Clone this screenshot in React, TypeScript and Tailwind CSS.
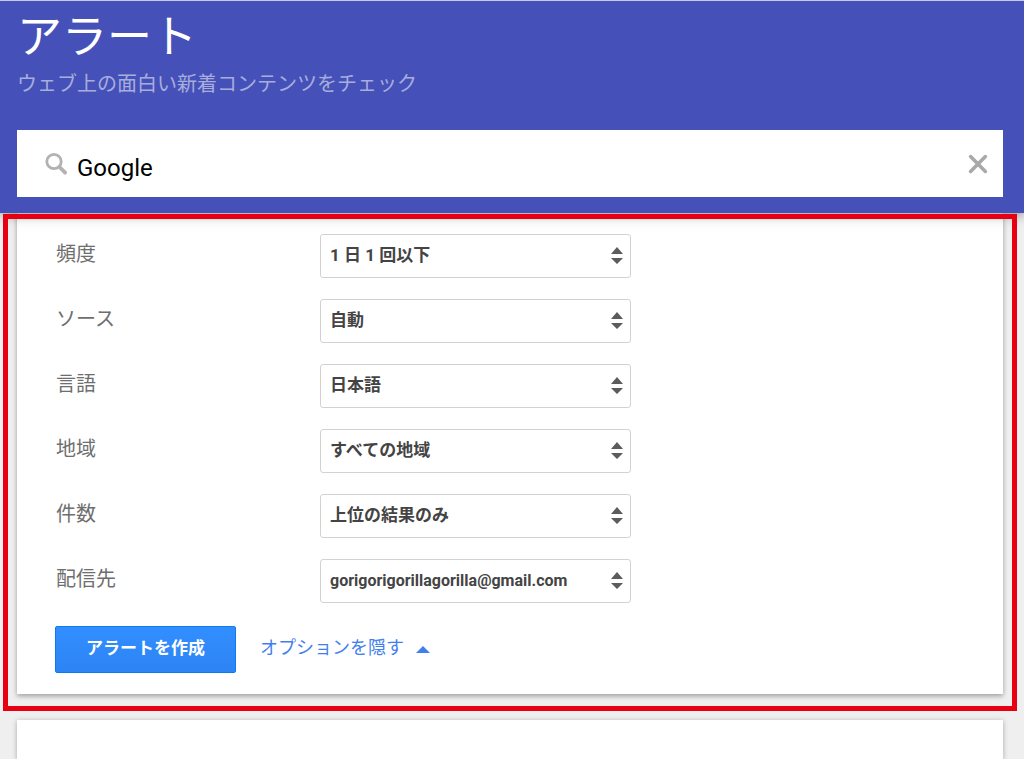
import { useState } from "react";

const OPTIONS = [
  { id: "frequency", label: "頻度", value: "1 日 1 回以下", size: "text-[17px]" },
  { id: "source", label: "ソース", value: "自動", size: "text-[17px]" },
  { id: "language", label: "言語", value: "日本語", size: "text-[17px]" },
  { id: "region", label: "地域", value: "すべての地域", size: "text-[17px]" },
  { id: "volume", label: "件数", value: "上位の結果のみ", size: "text-[17px]" },
  {
    id: "delivery",
    label: "配信先",
    value: "gorigorigorillagorilla@gmail.com",
    size: "text-[16px]",
  },
];

function SearchIcon() {
  return (
    <svg
      className="size-6 shrink-0"
      viewBox="0 0 24 24"
      fill="none"
      stroke="#b2b2b2"
      strokeLinecap="round"
      aria-hidden="true"
    >
      <circle cx="9" cy="9.5" r="7.2" strokeWidth="2.8" />
      <path d="M14.5 15l5.6 5.6" strokeWidth="3.8" />
    </svg>
  );
}

function CloseIcon() {
  return (
    <svg
      className="size-5"
      viewBox="0 0 20 20"
      stroke="#a9a9a9"
      strokeWidth="3.6"
      strokeLinecap="round"
      aria-hidden="true"
    >
      <path d="M2.6 2.6l14.8 14.8M17.4 2.6L2.6 17.4" />
    </svg>
  );
}

function OptionRow({ id, label, value, size }: (typeof OPTIONS)[number]) {
  return (
    <div className="flex items-center">
      <label
        htmlFor={id}
        className="w-[264px] shrink-0 pb-1 text-[20px] leading-6 text-[#6e6e6e]"
      >
        {label}
      </label>
      <div className="relative w-[311px]">
        <select
          id={id}
          className={`block h-11 w-full appearance-none rounded-[3px] border border-[#d2d2d2] bg-white pr-8 pl-[9px] font-bold text-[#444] ${size}`}
        >
          <option>{value}</option>
        </select>
        <svg
          className="pointer-events-none absolute top-[13px] right-2 h-[17px] w-3"
          viewBox="0 0 12 17"
          fill="#5c5c5c"
          aria-hidden="true"
        >
          <path d="M6 0l6 7H0zM6 17l6-6H0z" />
        </svg>
      </div>
    </div>
  );
}

export default function App() {
  const [query, setQuery] = useState("Google");

  return (
    <div
      lang="ja"
      className="flex min-h-screen flex-col bg-[#efefef] font-[Roboto,'Noto_Sans_CJK_JP',sans-serif]"
    >
      <header className="relative z-10 border-t border-[#c5cae9] bg-[#4551b8] pr-[21px] pb-4 pl-[17px] shadow-[0_1px_12px_rgba(0,0,0,0.5)]">
        <h1 className="pt-[9px] text-[45px] leading-14 text-white">アラート</h1>
        <p className="pt-1 text-[20px] leading-7 text-[#a7addd]">
          ウェブ上の面白い新着コンテンツをチェック
        </p>
        <div className="mt-8 flex h-[67px] items-center bg-white pr-[15px] pl-7">
          <SearchIcon />
          <input
            type="text"
            aria-label="検索キーワード"
            value={query}
            onChange={(e) => setQuery(e.target.value)}
            className="h-full min-w-0 flex-1 px-2 pt-2 text-[24px] text-black outline-none"
          />
          <button type="button" aria-label="クリア" onClick={() => setQuery("")}>
            <CloseIcon />
          </button>
        </div>
      </header>

      <section className="relative pr-[21px] pb-[26px] pl-[17px]">
        <div className="bg-white pt-[21px] pb-[21px] pl-[38px] shadow-[0_2px_5px_rgba(0,0,0,0.35)]">
          <div className="flex flex-col gap-[21px] pl-px">
            {OPTIONS.map((option) => (
              <OptionRow key={option.id} {...option} />
            ))}
          </div>
          <div className="mt-[23px] flex items-center gap-6">
            <button
              type="button"
              className="h-[47px] w-[181px] rounded-xs border border-[#0b7bf0] bg-linear-to-b from-[#328eff] to-[#2d84f4] pb-0.5 text-[17px] font-bold text-white"
            >
              アラートを作成
            </button>
            <a
              href="#options"
              className="flex items-center gap-3 pb-1 text-[18px] text-[#427fed]"
            >
              オプションを隠す
              <svg
                className="mt-1 h-[7px] w-3.5"
                viewBox="0 0 14 7"
                fill="currentColor"
                aria-hidden="true"
              >
                <path d="M7 0l7 7H0z" />
              </svg>
            </a>
          </div>
        </div>
        {/* Highlight frame around the options */}
        <div className="pointer-events-none absolute top-px right-[7px] bottom-[9px] left-[3px] z-20 border-[5px] border-[#e60012]" />
      </section>

      <section className="mr-[21px] ml-[17px] flex-1 bg-white shadow-[0_1px_5px_rgba(0,0,0,0.3)]" />
    </div>
  );
}
